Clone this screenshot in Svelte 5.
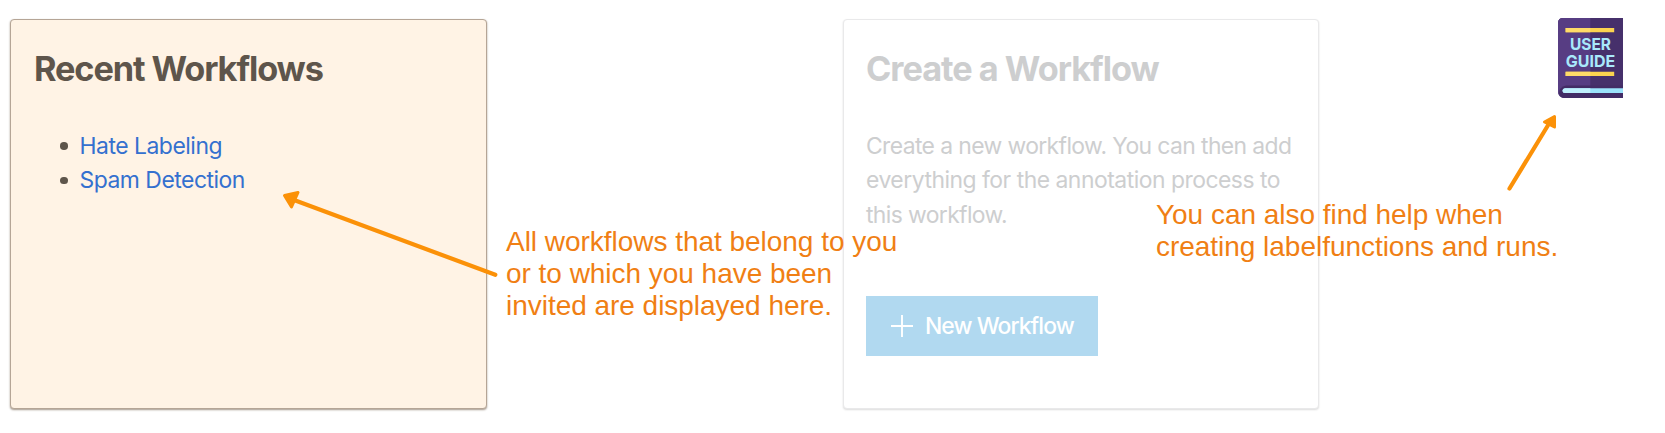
<script>
  const workflows = ['Hate Labeling', 'Spam Detection'];
</script>

<main class="page">
  <section class="card recent">
    <h2>Recent Workflows</h2>
    <ul>
      {#each workflows as name}
        <li><span class="link">{name}</span></li>
      {/each}
    </ul>
  </section>

  <section class="card create">
    <h2>Create a Workflow</h2>
    <p>
      <span class="l1">Create a new workflow. You can then add</span><br />
      <span class="l2">everything for the annotation process to</span><br />
      <span class="l3">this workflow.</span>
    </p>
    <button>
      <svg width="22" height="22" viewBox="0 0 22 22" aria-hidden="true">
        <path d="M11 0v22M0 11h22" stroke="#fff" stroke-width="1.9" fill="none" />
      </svg>
      <span>New Workflow</span>
    </button>
  </section>

  <svg class="guide" width="66" height="80" viewBox="0 0 66 80">
    <path d="M6 0H66V80H7Q1 79 1 73V5Q1 0 6 0Z" fill="#46306b" />
    <path d="M1 5Q1 0 6 0H33.300V80H7Q1 79 1 73Z" fill="#573d83" />
    <path d="M66 67.500H9Q2 69 2 75Q3 80 8 80H66Z" fill="#432c66" />
    <path d="M66 70.300H8Q5.500 70.500 5.500 72.700T8 75H66Z" fill="#9be3fb" />
    <path d="M33.300 70.300H8Q5.500 70.500 5.500 72.700T8 75H33.300Z" fill="#c0f0fd" />
    <path d="M8.600 12.200H57.200M8.600 55.900H57.200" stroke="#fbd34f" stroke-width="4.300" />
    <path d="M8.600 12.200H33.300M8.600 55.900H33.300" stroke="#ffdc68" stroke-width="4.300" />
    <text x="33.500" y="31.700" textLength="41" lengthAdjust="spacingAndGlyphs">USER</text>
    <text x="33.500" y="49.200" textLength="49.500" lengthAdjust="spacingAndGlyphs">GUIDE</text>
  </svg>

  <svg class="arrows" width="1665" height="433" viewBox="0 0 1665 433">
    <g stroke="#fb9108" stroke-width="4.200" stroke-linecap="round" fill="none">
      <path d="M495.300 274.800L294 200" />
      <path d="M1509.500 188.500L1550 122" />
    </g>
    <g fill="#fb9108" stroke="#fb9108" stroke-width="3" stroke-linejoin="round">
      <path d="M284.500 195.500L298 192.500L291.500 207Z" />
      <path d="M1554.500 116.500L1544.500 122L1554.500 127Z" />
    </g>
  </svg>

  <div class="note first">
    <span>All workflows that belong to you</span><br />or to which you have been<br />invited are displayed here.
  </div>
  <div class="note second">You can also find help when<br />creating labelfunctions and runs.</div>
</main>

<style>
  :global(body) {
    margin: 0;
    background: #fff;
  }
  .page {
    position: relative;
    box-sizing: border-box;
    width: 1665px;
    height: 433px;
    padding: 18px 42px 24px 10px;
    display: flex;
    align-items: flex-start;
    overflow: hidden;
    font-family: Inter, sans-serif;
    font-size: 22.9px;
    line-height: 34.3px;
  }
  .card {
    box-sizing: border-box;
    width: 477px;
    height: 390px;
    margin-top: 1px;
    padding: 23px 23px;
    border: 1px solid;
    border-radius: 4px;
  }
  .recent {
    background: #fff3e5;
    border-color: #b5a596;
    color: #5e554b;
    box-shadow: 0 1px 2px #a3978b;
  }
  .create {
    width: 476px;
    margin-left: 356px;
    padding-left: 22px;
    background: #fff;
    border-color: #e9e9ea;
    color: #cdcecf;
    box-shadow: 0 1px 2px #dcdcdc;
  }
  h2 {
    margin: 0;
    font-size: 34.3px;
    line-height: 52px;
    font-weight: 700;
    letter-spacing: -1.02px;
    white-space: nowrap;
  }
  .recent h2 {
    letter-spacing: -1.1px;
  }
  ul {
    margin: 34px 0 0;
    padding: 0;
    list-style: none;
  }
  li {
    display: flex;
    align-items: center;
    padding-left: 26px;
    height: 34.3px;
    letter-spacing: -0.48px;
  }
  li::before {
    content: '';
    width: 7.500px;
    height: 7.500px;
    margin-right: 12px;
    border-radius: 50%;
    background: #5e554b;
  }
  .link {
    color: #3470cf;
  }
  p {
    margin: 34px 0 0;
    white-space: nowrap;
  }
  .l1 {
    letter-spacing: -0.61px;
  }
  .l2 {
    letter-spacing: -0.49px;
  }
  .l3 {
    letter-spacing: -0.62px;
  }
  button {
    display: flex;
    align-items: center;
    gap: 12px;
    width: 232px;
    height: 60px;
    margin-top: 64px;
    padding: 1px 0 0 25px;
    border: 0;
    background: #b1d9f0;
    color: #fff;
    font: 500 22.9px Inter, sans-serif;
    letter-spacing: -0.94px;
    white-space: nowrap;
  }
  .guide {
    margin-left: auto;
  }
  .guide text {
    fill: #a9e9fb;
    font: 700 16.5px Inter, sans-serif;
    text-anchor: middle;
  }
  .arrows {
    position: absolute;
    left: 0;
    top: 0;
  }
  .note {
    position: absolute;
    color: #f07f14;
    font: 28px/32px 'Liberation Sans', sans-serif;
    letter-spacing: -0.03px;
    white-space: nowrap;
  }
  .first {
    left: 506px;
    top: 226px;
  }
  .second {
    left: 1156px;
    top: 199px;
  }
</style>
